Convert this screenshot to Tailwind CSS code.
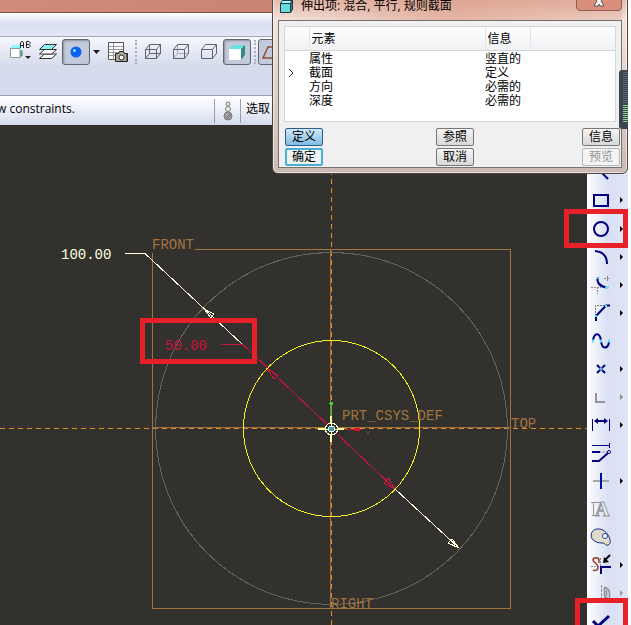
<!DOCTYPE html>
<html lang="zh-CN">
<head>
  <meta charset="UTF-8" />
  <meta name="viewport" content="width=device-width, initial-scale=1.0"/>
  <title>伸出项: 混合, 平行, 规则截面</title>
  <script src="https://cdn.jsdelivr.net/npm/@tailwindcss/browser@4"></script>
</head>
<body class="bg-white pr-[3px] font-['Open_Sans','Noto_Sans_CJK_SC',sans-serif] text-xs text-black">
<div class="relative flex flex-col h-screen overflow-hidden bg-[#33312d]">

  <!-- Window frame and menu strip -->
  <div class="h-3 shrink-0 bg-gradient-to-r from-[#d08c79] via-[#c88471] to-[#d29481]"></div>
  <div class="h-6 shrink-0 border-t border-[#7d4f48] bg-gradient-to-b from-white via-[#d7def0] to-[#e3e7f5]"></div>

  <!-- Toolbar -->
  <div class="h-[59px] shrink-0 border-t border-[#a6a9b3] bg-gradient-to-b from-[#f6f8fd] via-[#d5dbec] to-[#d6dcf0] pl-[6px]">
    <div class="flex items-center h-7 mt-[1px]">
      <button class="w-7 h-7 shrink-0" aria-label="Saved views">
        <svg class="w-7 h-7" viewBox="0 0 28 28" fill="none">
          <path d="M4.500 10.500l3-3h9M4.500 10.500v9h9.500v-9z" fill="#fff" stroke="#8a9a9a"/>
          <path d="M5 10l3-3h8l-2 3z" fill="#8ff"/>
          <path d="M14.500 12.500h2v5l-2 2z" fill="#4f8a80"/>
          <path d="M14.500 10V5l1-1.500h1l1 1.500v5M14.500 7.500h3M20.500 3.500h2.500l1 1v1l-1 1h-2.500zM20.500 6.500h2.500l1 1v1l-1 1h-2.500z" stroke="#222"/>
          <path d="M19 18h6l-3 3z" fill="#222"/>
        </svg>
      </button>
      <button class="w-7 h-7 shrink-0" aria-label="Layers">
        <svg class="w-7 h-7" viewBox="0 0 28 28" stroke="#333" stroke-linejoin="round">
          <path d="M5.500 20.500l5-4.500h12l-5 4.500z" fill="#fff"/>
          <path d="M5.500 16l5-4.500h12l-5 4.500z" fill="#fff"/>
          <path d="M5.500 11.500l5-5h12l-5 5z" fill="#8ff3f5"/>
        </svg>
      </button>
      <button class="w-7 h-[26px] shrink-0 rounded-[3px] border border-[#62656f] bg-[#c3cadb] flex items-center justify-center shadow-[inset_1px_1px_2px_#8b91a0]" aria-label="Spin center">
        <svg class="w-3 h-3" viewBox="0 0 12 12"><circle cx="6" cy="6" r="5.500" fill="#0a62f5"/><circle cx="4.500" cy="4.500" r="1.500" fill="#8fe8ff"/></svg>
      </button>
      <button class="w-[14px] h-7 shrink-0" aria-label="More view tools">
        <svg class="w-[14px] h-7" viewBox="0 0 14 28"><path d="M3 12h7l-3.500 4z" fill="#222"/></svg>
      </button>
      <button class="w-7 h-7 shrink-0" aria-label="View manager">
        <svg class="w-7 h-7" viewBox="0 0 28 28" fill="none">
          <path d="M4.500 4.500h15v17h-15z" fill="#fff" stroke="#555"/>
          <path d="M9.500 5v16M5 8.500h14M5 11.500h14M5 14.500h14M5 17.500h14" stroke="#999"/>
          <path d="M11.500 15.500h3l1-2h4l1 2h3v8h-12z" fill="#aaa798" stroke="#222"/>
          <circle cx="17.500" cy="19.500" r="2.500" fill="#fff" stroke="#222"/>
          <path d="M21 15.500h2v7" stroke="#222"/>
        </svg>
      </button>
      <span class="w-[7px] shrink-0 flex justify-center"><span class="h-6 border-l-2 border-dotted border-[#a9aebd]"></span></span>
      <button class="w-7 h-7 shrink-0" aria-label="Wireframe">
        <svg class="w-7 h-7" viewBox="0 0 28 28" fill="none" stroke="#62646c">
          <path d="M6.500 11.500h11v9h-11zM6.500 11.500l4-5h11l-4 5M21.500 6.500v9l-4 5M10.500 6.500v9h11M10.500 15.500l-4 5"/>
        </svg>
      </button>
      <button class="w-7 h-7 shrink-0" aria-label="Hidden line">
        <svg class="w-7 h-7" viewBox="0 0 28 28" fill="none" stroke="#62646c">
          <path d="M10.500 6.500v9h11M10.500 15.500l-4 5" stroke="#a4a8b2"/>
          <path d="M6.500 11.500h11v9h-11zM6.500 11.500l4-5h11l-4 5M21.500 6.500v9l-4 5"/>
        </svg>
      </button>
      <button class="w-7 h-7 shrink-0" aria-label="No hidden">
        <svg class="w-7 h-7" viewBox="0 0 28 28" fill="none" stroke="#62646c">
          <path d="M6.500 11.500h11v9h-11zM6.500 11.500l4-5h11l-4 5M21.500 6.500v9l-4 5"/>
        </svg>
      </button>
      <button class="w-7 h-[26px] shrink-0 rounded-[3px] border border-[#62656f] bg-[#c3cadb] flex items-center justify-center shadow-[inset_1px_1px_2px_#8b91a0]" aria-label="Shading">
        <svg class="w-[18px] h-4" viewBox="0 0 18 16"><path d="M1 5l4-4h12l-4 4z" fill="#63e5e4"/><path d="M1 5h12v11H1z" fill="#fff"/><path d="M13 5l4-4v10l-4 5z" fill="#348a80"/></svg>
      </button>
      <span class="w-[7px] shrink-0 flex justify-center"><span class="h-6 border-l-2 border-dotted border-[#a9aebd]"></span></span>
      <button class="w-7 h-[26px] shrink-0 rounded-[3px] border border-[#62656f] bg-[#c3cadb] flex items-center justify-center" aria-label="Datum planes">
        <svg class="w-5 h-5" viewBox="0 0 20 20"><path d="M1 16L6 5h12l-5 11z" fill="none" stroke="#8d4d33" stroke-width="1.500"/></svg>
      </button>
    </div>
  </div>

  <!-- Message bar -->
  <div class="h-[30px] shrink-0 border-t border-[#9b9fab] bg-gradient-to-b from-white via-[#eceff9] to-[#d4daed] flex items-center">
    <p class="w-[214px] pb-1 shrink-0 whitespace-nowrap -indent-[3px]">w constraints.</p>
    <div class="w-[27px] h-6 shrink-0 border-x border-[#9a9eaa] flex items-center justify-center">
      <svg class="w-3 h-5" viewBox="0 0 12 20" fill="#eee" stroke="#777"><circle cx="6" cy="3" r="2"/><circle cx="6" cy="8" r="2.500"/><circle cx="6" cy="15" r="4" fill="#a5a5a5"/><path d="M4 17l4-4M5 18l4-4"/></svg>
    </div>
    <span class="pl-[5px] pb-1">选取</span>
  </div>

  <div class="flex flex-1 min-h-0">
    <!-- Sketch area -->
    <main class="flex-1 min-w-0">
      <svg class="block w-full h-full" viewBox="0 125 587 500" preserveAspectRatio="xMinYMin slice" fill="none" shape-rendering="crispEdges">
        <!-- datum planes -->
        <path d="M195 249.500H510.500V608.500H152.500V253" stroke="#a0743f"/>
        <path d="M152 427.500H510M330.500 250V608" stroke="#a0743f"/>
        <path d="M0 428.500H587M331.500 125V625" stroke="#e08c26" stroke-dasharray="5 4"/>
        <circle cx="331.500" cy="428.500" r="176" stroke="#66645f"/>
        <circle cx="331.500" cy="428.500" r="88" stroke="#f3f320"/>

        <!-- diameter 100 -->
        <path d="M125 253.500H145L243 345M395 489L459 548" stroke="#ffffe0"/>
        <path d="M204 309l7 9 3-4zM459 548l-11-5 4-4z" stroke="#ffffe0"/>
        <!-- diameter 50 -->
        <path d="M221 344.500H243L395 489" stroke="#c8143c"/>
        <path d="M267 369l7 10 4-4zM395 489l-11-6 4-5z" stroke="#d8143c"/>

        <!-- coordinate system -->
        <path d="M331.500 403V416" stroke="#35c435"/>
        <circle cx="331.500" cy="403.500" r="2" fill="#35d835"/>
        <path d="M345 429H361" stroke="#b01c34"/>
        <path d="M354 429H360" stroke="#d8142c" stroke-width="3"/>
        <path d="M366 431l4 4M370 431l-4 4" stroke="#5f4d38"/>
        <path d="M331 416v26M318 429h26" stroke="#ffff9c" stroke-width="2"/>
        <circle cx="331.500" cy="429" r="6" fill="#33312d" stroke="#ffffe0"/>
        <path d="M331 423v12M325 429h12" stroke="#ffff9c"/>
        <circle cx="331.500" cy="429" r="3" fill="#3a9db0" stroke="#fff"/>

        <g class="font-['Liberation_Mono',monospace] text-[14px]" fill="#a0743f">
          <text x="61" y="259" fill="#ffffe0">100.00</text>
          <text x="165" y="350" fill="#c8143c">50.00</text>
          <text x="152" y="249">FRONT</text>
          <text x="342" y="420">PRT_CSYS_DEF</text>
          <text x="511" y="428">TOP</text>
          <text x="331" y="608">RIGHT</text>
        </g>
        <rect x="142.500" y="320.500" width="112" height="41" stroke="#e8202a" stroke-width="5"/>
      </svg>
    </main>

    <!-- Sketcher tools -->
    <aside class="w-[41px] shrink-0 pt-[6px] bg-gradient-to-r from-white via-[#d9e0f3] to-[#dfe5f6]">
      <button class="flex w-full h-7" aria-label="Select"></button>
      <button class="flex w-full h-7" aria-label="Line">
        <svg class="w-[41px] h-7" viewBox="0 0 41 28" fill="none"><path d="M7 6l14 14" stroke="#00007c" stroke-width="2"/></svg>
      </button>
      <button class="flex w-full h-7" aria-label="Rectangle">
        <svg class="w-[41px] h-7" viewBox="0 0 41 28" fill="none"><path d="M7 8h14v11H7z" stroke="#00007c" stroke-width="2"/><path d="M33 10v6l3-3z" fill="#000"/></svg>
      </button>
      <button class="relative flex w-full h-7" aria-label="Circle">
        <svg class="w-[41px] h-7" viewBox="0 0 41 28" fill="none"><circle cx="14" cy="14" r="7" stroke="#00007c" stroke-width="2"/><path d="M33 11v6l3-3z" fill="#000"/></svg>
        <span class="absolute -left-[23px] right-0 -top-[6px] h-[39px] border-[5px] border-[#e8202a]"></span>
      </button>
      <button class="flex w-full h-7" aria-label="Arc">
        <svg class="w-[41px] h-7" viewBox="0 0 41 28" fill="none"><path d="M8 8q12 1 12 13" stroke="#00007c" stroke-width="2"/><path d="M33 11v6l3-3z" fill="#000"/></svg>
      </button>
      <button class="flex w-full h-7" aria-label="Fillet">
        <svg class="w-[41px] h-7" viewBox="0 0 41 28" fill="none"><path d="M4 16.500h10M10.500 16v7M17 7.500h6M20.500 5v6" stroke="#888" stroke-dasharray="2 1"/><path d="M10.500 6q-1 9 9 10.500" stroke="#00007c" stroke-width="2"/><path d="M10 6v2M18 16.500h4" stroke="#5ce0f5" stroke-width="2"/><path d="M33 11v6l3-3z" fill="#000"/></svg>
      </button>
      <button class="flex w-full h-7" aria-label="Chamfer">
        <svg class="w-[41px] h-7" viewBox="0 0 41 28" fill="none"><path d="M8.500 17V6.500h12" stroke="#777" stroke-dasharray="2 1"/><path d="M9 22v-5L19 6.500h4" stroke="#00007c" stroke-width="2"/><path d="M8 17h2M18 7h2" stroke="#5ce0f5" stroke-width="2"/><path d="M33 11v6l3-3z" fill="#000"/></svg>
      </button>
      <button class="flex w-full h-7" aria-label="Spline">
        <svg class="w-[41px] h-7" viewBox="0 0 41 28" fill="none"><path d="M6 14c1-9 7-9 8 0s7 8 8 1" stroke="#00007c" stroke-width="2"/><path d="M5 14h2M13 14h2M21 14h2" stroke="#5ce0f5" stroke-width="3"/></svg>
      </button>
      <button class="flex w-full h-7" aria-label="Point">
        <svg class="w-[41px] h-7" viewBox="0 0 41 28" fill="none"><path d="M10 10l8 8M18 10l-8 8" stroke="#00007c" stroke-width="2"/><path d="M12.500 12.500h3v3h-3z" fill="#5cb8f0"/><path d="M33 11v6l3-3z" fill="#000"/></svg>
      </button>
      <button class="flex w-full h-7" aria-label="Use edge" disabled>
        <svg class="w-[41px] h-7" viewBox="0 0 41 28" fill="none"><path d="M9 10v9h9" stroke="#92949a" stroke-width="2"/><path d="M33 11v6l3-3z" fill="#888"/></svg>
      </button>
      <button class="flex w-full h-7" aria-label="Dimension">
        <svg class="w-[41px] h-7" viewBox="0 0 41 28" fill="none"><path d="M5.500 8v12M22.500 8v12" stroke="#00007c"/><path d="M8 10h12" stroke="#00007c" stroke-width="2"/><path d="M7 10l4-3v6zM21 10l-4-3v6z" fill="#00007c"/><path d="M33 11v6l3-3z" fill="#000"/></svg>
      </button>
      <button class="flex w-full h-7" aria-label="Modify">
        <svg class="w-[41px] h-7" viewBox="0 0 41 28" fill="none"><path d="M5 6.500h17M22.500 4v5" stroke="#00007c"/><path d="M5 13h8M5 22h7l9-8" stroke="#00007c" stroke-width="2"/><path d="M13 13h8" stroke="#888" stroke-dasharray="2 1"/><circle cx="22" cy="13" r="1.500" stroke="#00007c" fill="#fff"/></svg>
      </button>
      <button class="flex w-full h-7" aria-label="Constraints">
        <svg class="w-[41px] h-7" viewBox="0 0 41 28" fill="none"><path d="M6 14h16" stroke="#a3a7a8" stroke-width="2"/><path d="M14 6v16" stroke="#00109c" stroke-width="2"/><path d="M33 11v6l3-3z" fill="#000"/></svg>
      </button>
      <button class="flex w-full h-7" aria-label="Text" disabled>
        <svg class="w-[41px] h-7" viewBox="0 0 41 28" fill="none" stroke="#92949a"><path d="M6.500 7v13M4 7.500h9M5 20.500h3"/><text x="8" y="21" font-size="20" font-weight="bold" font-family="Liberation Serif, serif" fill="#f2f4f9">A</text></svg>
      </button>
      <button class="flex w-full h-7" aria-label="Palette">
        <svg class="w-[41px] h-7" viewBox="0 0 41 28"><path d="M5 9c3-5 12-4 16 3 3 5 3 9 0 10-3 1-2-2-6-2C7 20 2 15 5 9z" fill="#dedbc8" stroke="#1c2c8c"/><circle cx="18" cy="13" r="2.500" fill="#fff" stroke="#1c3cac"/></svg>
      </button>
      <button class="flex w-full h-7" aria-label="Trim">
        <svg class="w-[41px] h-7" viewBox="0 0 41 28" fill="none"><path d="M4 15.500h8M13.500 7v9" stroke="#888" stroke-dasharray="2 1"/><path d="M12 12V9c0-3-6-3-6 0s5 3 5 7-4 4-5 3" stroke="#a33a2c" stroke-width="1.500"/><path d="M14 23v-7h10" stroke="#00007c" stroke-width="2"/><path d="M23 4l-5 5" stroke="#000" stroke-width="2"/><path d="M16 12l1-6 5 5z" fill="#000"/><path d="M33 11v6l3-3z" fill="#000"/></svg>
      </button>
      <button class="flex w-full h-7" aria-label="Mirror" disabled>
        <svg class="w-[41px] h-7" viewBox="0 0 41 28" fill="none" stroke="#8c8e92"><path d="M14.500 6v16" stroke-dasharray="3 1"/><path d="M17.500 8.500q5 1 5 6v6l-5-3zM19.500 11v6" stroke-width="1.500"/><path d="M33 11v6l3-3z" fill="#999" stroke="none"/></svg>
      </button>
      <button class="relative flex w-full h-7" aria-label="Done">
        <svg class="w-[41px] h-7" viewBox="0 0 41 28" fill="none"><path d="M6 14l5 5 11-10" stroke="#00007c" stroke-width="3"/></svg>
        <span class="absolute -left-[12px] right-0 -top-[9px] h-10 border-[5px] border-[#e8202a]"></span>
      </button>
    </aside>
  </div>

  <!-- Element dialog -->
  <section class="absolute right-0 -top-2 w-[356px] px-[5px] pb-[5px] rounded-[6px] border border-[#4e4542] bg-gradient-to-b from-[#e6bdb0] from-5% via-[#f3e4dc] via-15% to-[#cbbab4] shadow-[inset_0_0_0_1px_#ffffff90]">
    <header class="flex items-start justify-between h-[27px] pl-[2px] bg-gradient-to-r from-transparent via-[#d9957f]/60 to-[#d9957f]/30">
      <div class="flex items-center gap-2 pt-[5px]">
        <svg class="w-[13px] h-[13px]" viewBox="0 0 13 13" stroke="#234"><path d="M.5 3.500l2-3h10l-2 3z" fill="#9ff"/><path d="M.5 3.500h10v9H.5z" fill="#66dcd8"/><path d="M10.500 3.500l2-3v9l-2 3z" fill="#2a8a88"/></svg>
        <h1 class="leading-4">伸出项: 混合, 平行, 规则截面</h1>
      </div>
      <button class="w-[46px] h-[18px] rounded-b-[4px] border border-[#8d5f55] bg-[#d98f7c] flex items-end justify-center pb-[2px]" aria-label="关闭">
        <svg class="w-3 h-3" viewBox="0 0 12 12"><path d="M1 0h4l1 2 1-2h4L8 5l3 5H7L6 8l-1 2H1l3-5z" fill="#fff" stroke="#555"/></svg>
      </button>
    </header>

    <div class="border border-[#77716f] bg-[#f0f0f0] pt-[5px] px-[5px] pb-px">
      <div class="h-24 border border-[#d4d7da] bg-white">
        <table class="w-full table-fixed border-collapse text-left leading-[14px]">
          <thead class="bg-gradient-to-b from-white to-[#eff1f3]">
            <tr class="h-[23px] border-b border-[#d5d5d5]">
              <th class="w-6 font-normal"></th>
              <th class="w-44 border-l border-[#e2e5e8] pl-[2px] pt-[2px] font-normal">元素</th>
              <th class="w-[45px] border-l border-[#e2e5e8] pl-[2px] pt-[2px] font-normal">信息</th>
              <th class="border-l border-[#e2e5e8]"></th>
            </tr>
          </thead>
          <tbody>
            <tr class="h-[2px]"></tr>
            <tr><td></td><td>属性</td><td>竖直的</td></tr>
            <tr>
              <td class="pl-[3px]"><svg class="w-2 h-2" viewBox="0 0 8 8"><path d="M1 0l4 4-4 4" fill="none" stroke="#333"/></svg></td>
              <td>截面</td><td>定义</td>
            </tr>
            <tr><td></td><td>方向</td><td>必需的</td></tr>
            <tr><td></td><td>深度</td><td>必需的</td></tr>
          </tbody>
        </table>
      </div>
      <div class="-mr-[4px] pl-px mt-[6px] flex leading-4">
        <div class="w-[151px] flex flex-col gap-[2px]">
          <button class="w-[38px] h-[18px] rounded-[2px] border border-[#2c5f87] bg-gradient-to-b from-[#cfe8f8] to-[#7dbde3] flex items-center justify-center">定义</button>
          <button class="w-[38px] h-[18px] rounded-[2px] border-2 border-[#48b0d6] bg-[#eef3f5] flex items-center justify-center">确定</button>
        </div>
        <div class="flex flex-col gap-[2px]">
          <button class="w-[38px] h-[18px] rounded-[2px] border border-[#777] bg-gradient-to-b from-[#f4f4f4] to-[#d8d8d8] flex items-center justify-center">参照</button>
          <button class="w-[38px] h-[18px] rounded-[2px] border border-[#777] bg-gradient-to-b from-[#f4f4f4] to-[#d8d8d8] flex items-center justify-center">取消</button>
        </div>
        <div class="ml-auto flex flex-col gap-[2px]">
          <button class="w-[38px] h-[18px] rounded-[2px] border border-[#777] bg-gradient-to-b from-[#f4f4f4] to-[#d8d8d8] flex items-center justify-center">信息</button>
          <button class="w-[38px] h-[18px] rounded-[2px] border border-[#b5b8bb] bg-[#f4f4f4] text-[#929292] flex items-center justify-center" disabled>预览</button>
        </div>
      </div>
    </div>
  </section>

  <!-- Level meter -->
  <div class="absolute right-0 top-[70px] w-[9px] h-[59px] rounded-l-[3px] bg-[#3d4350] flex justify-end">
    <svg class="w-[5px] h-[59px]" viewBox="0 0 5 59" shape-rendering="crispEdges">
      <path d="M2.500 2V34" stroke="#5a6272" stroke-width="5" stroke-dasharray="1 1"/>
      <path d="M2.500 35V53" stroke="#86dc8c" stroke-width="5" stroke-dasharray="1 1"/>
    </svg>
  </div>
</div>
</body>
</html>
